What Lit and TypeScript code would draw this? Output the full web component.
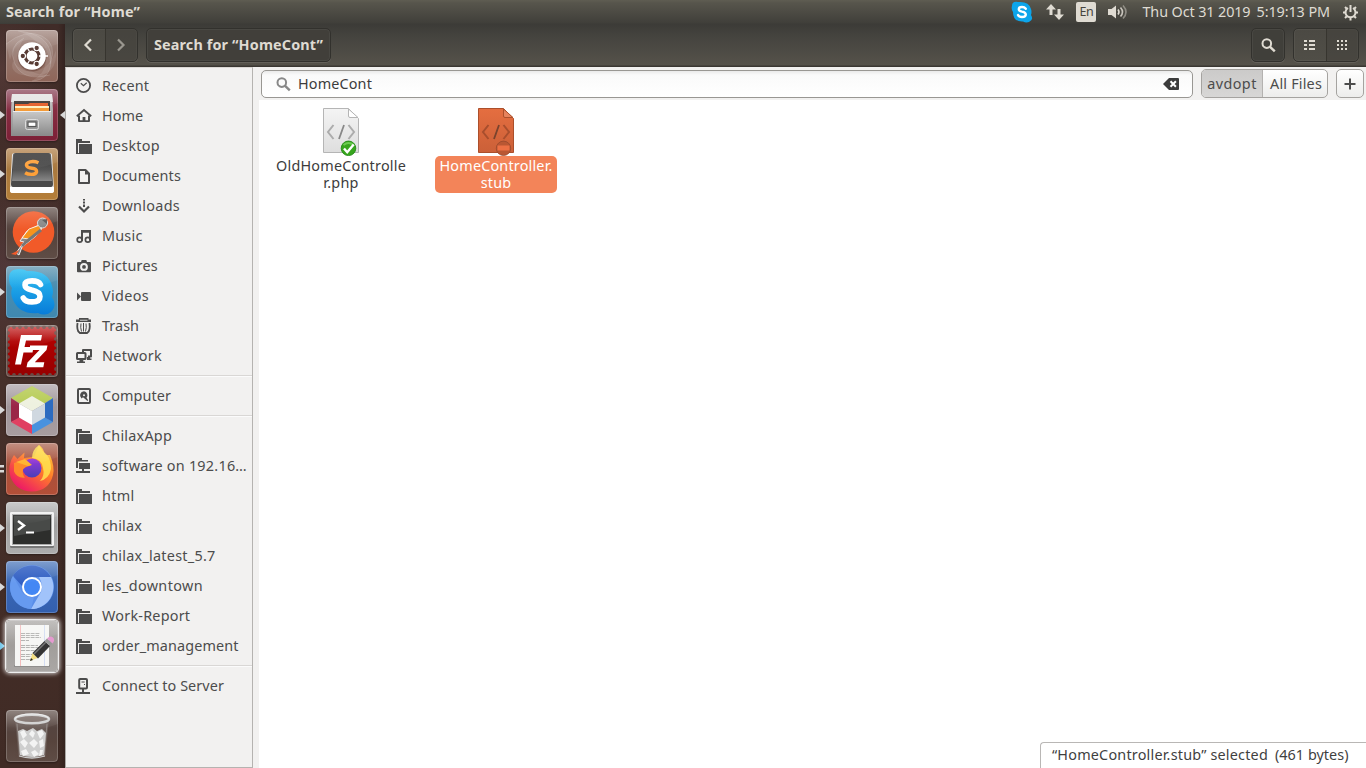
import { LitElement, html, css, svg, SVGTemplateResult } from "lit";
import { customElement, property } from "lit/decorators.js";

/* One line of text whose tracking is adjusted so that it fills a given width. */
@customElement("fit-text")
class FitText extends LitElement {
  @property() text = "";
  @property({ type: Number }) w = 0;
  static styles = css`
    :host { display: inline-block; white-space: pre; flex: none; }
    span { display: inline-block; }
  `;
  updated() {
    const el = this.renderRoot.querySelector("span") as HTMLElement;
    el.style.letterSpacing = "0px";
    const natural = el.getBoundingClientRect().width;
    const gap = (this.w - natural) / Math.max(1, this.text.length);
    el.style.letterSpacing = gap.toFixed(3) + "px";
  }
  render() {
    return html`<span>${this.text}</span>`;
  }
}

const folder = svg`<path d="M0 1h6v2h8v2H2v11H0z"/><path d="M3 6h13v9.500a.5.5 0 0 1-.5.5H3z"/><path d="M0 15h3v1H0z"/>`;

const glyphs: Record<string, SVGTemplateResult> = {
  folder,
  recent: svg`<circle cx="7.500" cy="7.500" r="6.600" fill="none" stroke="currentColor" stroke-width="1.800"/><path d="M4.800 5.300l2.700 2.500 3.200-3" fill="none" stroke="currentColor" stroke-width="1.200"/>`,
  home: svg`<path d="M.8 8.200L8 2l7.200 6.200" fill="none" stroke="currentColor" stroke-width="1.900"/><path d="M2 7.500h2V12.200h2.600V9h2.800v3.200H12V7.500h2V13a1 1 0 0 1-1 1H3a1 1 0 0 1-1-1z"/>`,
  doc: svg`<path d="M3 2h6.500L13 5.500V15H3z" fill="none" stroke="currentColor" stroke-width="2" stroke-linejoin="round"/><path d="M9 2v4.500h4.500z"/>`,
  down: svg`<path d="M7 1h2v1.500H7zM7 3.600h2v1.800H7zM7 6.400h2V9H7z"/><path d="M3 8.500L8 13.500l5-5" fill="none" stroke="currentColor" stroke-width="2.200"/>`,
  music: svg`<path d="M5 2h10v10h-2V4.800H7V13H5z"/><circle cx="3.600" cy="11.800" r="2.400" fill="none" stroke="currentColor" stroke-width="1.700"/><circle cx="11.800" cy="11.800" r="2.400" fill="none" stroke="currentColor" stroke-width="1.700"/>`,
  camera: svg`<path fill-rule="evenodd" d="M5 4l.7-2h4.600L11 4h3q1 0 1 1v8.500q0 .8-1 .8H2q-1 0-1-.8V5q0-1 1-1zM8 5a3.900 3.900 0 1 0 0 7.800A3.900 3.900 0 0 0 8 5zm0 2a1.900 1.900 0 1 1 0 3.800A1.900 1.900 0 0 1 8 7z"/>`,
  video: svg`<path d="M1 4.500L5 8.500 1 12.500z"/><rect x="5" y="4" width="10" height="9" rx="1"/>`,
  trash: svg`<path d="M3 0h9.500v1.500H15V4H0V1.500h3z"/><path d="M4 1.800h7.500v.8H4z" fill="#f2f1f0"/><path d="M1.600 5q-1 5 .7 8.500L4 15h7l1.700-1.500Q14.400 10 13.400 5" fill="none" stroke="currentColor" stroke-width="1.800"/><path d="M5 5.500q-.8 4 .5 8M7.500 5v8.500M10 5.500q.8 4-.5 8" fill="none" stroke="currentColor" stroke-width="1"/>`,
  network: svg`<path d="M7 4V2h8v6.500h-3" fill="none" stroke="currentColor" stroke-width="2" stroke-linejoin="round"/><path d="M11 9h3v1.500h1.500V12H11z"/><rect x="1" y="5" width="8.500" height="6" rx=".6" fill="none" stroke="currentColor" stroke-width="2"/><path d="M3.500 12h3.800v1.500H9V15H1v-1.500h2.500z"/>`,
  disk: svg`<rect x="2" y="1" width="12" height="14" rx="1" fill="none" stroke="currentColor" stroke-width="2"/><path d="M8 3.300a4 4 0 0 0-2.500 7.100L7 9.200 11.500 13l.7-.7-1.700-2.500A4 4 0 0 0 8 3.300z"/><circle cx="8" cy="7.200" r="1" fill="#f2f1f0"/>`,
  remote: svg`<path d="M0 0h6v2h6v1.600H2V10H0z"/><path d="M3 5h11v6H8v2h6v2H0v-2h6v-2H3z"/>`,
  server: svg`<rect x="3.200" y="1" width="7.800" height="9.500" rx="1" fill="none" stroke="currentColor" stroke-width="2"/><path d="M5.500 3.500h3.200v1h-3.200zM8 6h1v1H8zM6 11h2v3h6v2H0v-2h6z"/>`,
};

const places: [string, string, number][][] = [
  [
    ["recent", "Recent", 47], ["home", "Home", 41.300], ["folder", "Desktop", 58], ["doc", "Documents", 79],
    ["down", "Downloads", 78], ["music", "Music", 40.500], ["camera", "Pictures", 56], ["video", "Videos", 47],
    ["trash", "Trash", 37], ["network", "Network", 60],
  ],
  [["disk", "Computer", 69]],
  [
    ["folder", "ChilaxApp", 70], ["remote", "software on 192.16…", 145], ["folder", "html", 32.500], ["folder", "chilax", 40],
    ["folder", "chilax_latest_5.7", 113.500], ["folder", "les_downtown", 101], ["folder", "Work-Report", 88.200], ["folder", "order_management", 136.500],
  ],
  [["server", "Connect to Server", 122]],
];

const apps: { bg: string; mark?: string; back?: boolean; focus?: boolean; art: SVGTemplateResult }[] = [
  {
    bg: "dash",
    art: svg`<g fill="#fff" fill-opacity=".1"><path d="M0 14Q20-2 36 6T44 34Q42 12 26 10T4 30z"/><path d="M12 1Q44 4 45 27T26 51Q44 40 38 24T12 1z"/><path d="M50 20Q52 46 27 46T7 31Q16 44 30 41T50 20z"/><path d="M44 45Q17 52 9 34T18 8Q8 24 18 35T44 45z"/></g>
    <g fill="none" stroke="#fff" stroke-opacity=".14"><path d="M0 14Q20-2 36 6T44 34"/><path d="M12 1Q44 4 45 27T26 51"/><path d="M44 45Q17 52 9 34T18 8"/></g>
    <circle cx="26" cy="27" r="14.500" fill="#5c3932" opacity=".4"/><circle cx="26" cy="26" r="13.800" fill="#fff"/><circle cx="26" cy="26" r="7" fill="none" stroke="#573a33" stroke-width="3.200"/>
    <path d="M19 14l4.500 7.500M33 26h9M19 38l4.500-7.500" stroke="#fff" stroke-width="1.300"/><g stroke="#fff" stroke-width="1.100" fill="#573a33"><circle cx="16.800" cy="26" r="2.700"/><circle cx="30.700" cy="18" r="2.700"/><circle cx="30.700" cy="34" r="2.700"/></g>`,
  },
  {
    bg: "files", mark: "one", back: true,
    art: svg`<path d="M6 5h40l1 16v26H5V21z" fill="url(#silver)"/><path d="M6 5h40l1 8H5z" fill="#e4e4e4"/><rect x="8" y="12" width="36" height="12" fill="#3b3532"/><path d="M9 15h13l2-1h18v8H9z" fill="#e55b25"/><path d="M9 17h34v2H9z" fill="#fff0c0"/><path d="M9 19h34v5H9z" fill="#f49b38"/><path d="M7 22h38v24H7z" fill="url(#silver)"/><path d="M7 22h38v1H7z" fill="#eee"/><rect x="19.500" y="30.500" width="13" height="10" rx="2" fill="#999" stroke="#ddd"/><rect x="22" y="33" width="8" height="4.500" fill="#fff" stroke="#555" stroke-width="1.200"/>`,
  },
  {
    bg: "sublime", mark: "one",
    art: svg`<path d="M6 7Q6 5 9 5h34q3 0 3 2l2 34q0 4-3 4H7q-3 0-3-4z" fill="#e6e6e6"/><path d="M4 39h44v4q0 2-3 2H7q-3 0-3-2z" fill="#fff"/><path d="M7 7Q7 5 10 5h32q3 0 3 2l2 29q0 3-2 3H7q-2 0-2-3z" fill="#4a4a4a"/><path d="M8 7q0-2 2-2h32q2 0 2 2l2 26H6z" fill="url(#dark)"/><path d="M32.500 14.700q-4-1.700-8.500-.9-4 1.100-3.500 3.600.5 2.300 5.500 2.800t4.600 3.500q-.7 2.700-5 2.700-4 0-6.500-1.600" fill="none" stroke="#fda039" stroke-width="3.400"/>`,
  },
  {
    bg: "clear",
    art: svg`<circle cx="27.500" cy="25" r="20.800" fill="#f15a29"/><path d="M33 18L21 24 14 34l4 1-8 11 3 2 3-8 14-11 6-8z" fill="#8a8a8a" stroke="#eee" stroke-width="1"/><path d="M34 18l-11 4-7 9 7 1 12-9z" fill="#f7941d" stroke="#fff" stroke-width=".8"/><path d="M35 23L20 35l-4 4" stroke="#777" stroke-width="3" fill="none"/><circle cx="36.500" cy="16" r="5" fill="#888" stroke="#ddd" stroke-width="1"/><path d="M36 13l5-1v5z" fill="#555"/><path d="M5 47l8-4-3 5z" fill="#f15a29"/>`,
  },
  {
    bg: "skype", mark: "one",
    art: svg`<path d="M3 14Q2 3 13 3q5 0 8 2 21-1 25 15 2 6 0 11 5 8 0 14-6 6-14 2Q14 49 7 34 4 28 6 22 3 18 3 14z" fill="url(#sky)"/><path d="M34.500 18.500q-2-3.600-8.500-3.600-7 0-7 4 0 3.500 6.700 5.100 8.300 1.700 8.300 6.500 0 5.400-8 5.400-6.700 0-8.700-4" fill="none" stroke="#fff" stroke-width="5.600" stroke-linecap="round"/>`,
  },
  {
    bg: "clear",
    art: svg`<rect x="2" y="2" width="48" height="48" fill="url(#red)"/><rect x="2" y="2" width="48" height="48" fill="none" stroke="#6b4a44" stroke-width="3.800" stroke-linecap="round" stroke-dasharray="0 6"/><path d="M15 10h21l-1 5.500H20L18.500 22h9l-1 5.500h-9L15 39.500H9z" fill="#fff"/><path d="M24 20.500h17.500L40.500 25 28.800 37.200h9.500l-1 5H20.500l1-4.700L33.500 25H24z" fill="#fff"/>`,
  },
  {
    bg: "grey", mark: "one",
    art: svg`<path d="M26 2l21 12-10 6-11-7-11 7-10-6z" fill="#b6cb53"/><path d="M5 14l9 6v14l-9 4z" fill="#9a2647"/><path d="M5 38l9-5 12 7v10z" fill="#e04061"/><path d="M47 38l-9-5-12 7v10z" fill="#4992df"/><path d="M47 14l-9 6v13l9 5z" fill="#2c6bc0"/><path d="M26 12l13 7.500L26 27l-13-7.500z" fill="#eef1df"/><path d="M13 19.500L26 27v14l-13-7.500z" fill="#fff"/><path d="M39 19.500L26 27v14l13-7.500z" fill="#d0d8e0"/>`,
  },
  {
    bg: "fox", mark: "two",
    art: svg`<path d="M8 12l3.500 4 7-6.500-.5 5.500 10-1 5-12q4 2 6 10l5 0q5 12 3 20-4 16-21 16.500Q10 48 4.500 34 1 22 8 12z" fill="url(#flame)"/><path d="M33 2q-7 5-7 13 10 1 11 10 2 8-3 13 9-2 11-12 0-9-4-14-5-4-8-10z" fill="#ffe24f" opacity=".85"/><circle cx="26" cy="25" r="9.500" fill="url(#violet)"/><path d="M8 20q7-3 17 2.500-6 1-8 4-1 5 2 8-8 1-11-6z" fill="#ff8a2a"/><path d="M10 19l9-3 7 6-4 1z" fill="#ffb42e"/>`,
  },
  {
    bg: "steel", mark: "one",
    art: svg`<rect x="4" y="10" width="44" height="36" rx="1.500" fill="#777"/><rect x="4" y="10" width="44" height="34" rx="1" fill="#f1f1f1"/><rect x="6" y="12" width="40" height="31" fill="#aaa"/><rect x="7" y="13" width="38" height="29" fill="#2d2e2c"/><path d="M8 14h36v14L8 34z" fill="#484a48"/><path d="M12 19l6 4.500-6 4.500" fill="none" stroke="#fff" stroke-width="2.400"/><path d="M20 29.500h8v2h-8z" fill="#fff"/>`,
  },
  {
    bg: "chrome", mark: "one",
    art: svg`<circle cx="26" cy="26" r="22" fill="#5a8ee8"/><path d="M7 15A22 22 0 0 1 45 16H26q-8 0-10 9z" fill="#315fc3"/><path d="M45 16A22 22 0 0 1 25 48l10-17q3-5-2-15z" fill="#a1c3fa"/><path d="M7 15l9 16q4 6 12 5l-3 12A22 22 0 0 1 7 15z" fill="#669af0"/><circle cx="26" cy="26" r="10" fill="#fff"/><circle cx="26" cy="26" r="8" fill="#4387f4"/>`,
  },
  {
    bg: "paper", mark: "active", focus: true,
    art: svg`<path d="M8 45h36v2H8z" fill="#777" opacity=".5"/><rect x="9" y="5" width="34" height="41" fill="#f6f6f4"/><path d="M14.500 5v41" stroke="#f3bcbc"/><path d="M38.500 5v41" stroke="#c6d3f0" stroke-width=".7"/><path d="M15 13.500h19M15 15.500h18M15 17.500h20M15 20.500h8M15 25.500h17M15 27.500h18M15 30.500h16M15 34.500h12M15 36.500h10M15 39.500h12" stroke="#b4b4b2" stroke-dasharray="4 .8"/><path d="M24 41l2.500-8 5 5z" fill="#f4df83"/><path d="M24 41l1-3 2 2z" fill="#222"/><path d="M26.500 33L38.500 21l5.500 5L32 38.500z" fill="#343434"/><path d="M28 34l12-12" stroke="#777" stroke-width="1.500"/><path d="M38.500 21l2.500-2.500 5.500 5-2.500 2.500z" fill="#999"/><path d="M41 18.500q3.500-3.500 6-1t-.5 6z" fill="#e59ad0"/>`,
  },
];

const bin = svg`<path d="M9 9h34l-3.500 37Q26 50 12.500 46z" fill="#bbb" opacity=".18"/><path d="M12 21l5-2 4 2 6-3 4 3 5-2 4 4-2 22q-12 4-24 0z" fill="#cecece"/><path d="M14 22l4-2 3 5-4 4zM23 24l3-4 3 3-2 5zM31 22l5-2 2 4-4 5zM14 32l4-3 4 4-3 5zM23 33l5-4 4 4-4 5zM33 31l4-2 1 7-4 2zM15 41l5-2 3 5-6 2zM25 42l4-2 4 4-5 3zM34 40l3 0-1 5-3 1z" fill="#f3f3f3"/><path d="M11 14l3 32M41 14l-3 32" stroke="#ddd" opacity=".3"/><ellipse cx="26" cy="9" rx="17" ry="4.300" fill="#7b6d68" stroke="#cfcfcf" stroke-width="2.600"/><path d="M9 8.500q4-4.600 17-4.600T43 8.500" stroke="#eee" fill="none"/><path d="M13 46q13 4 26 0" stroke="#ccc" stroke-width="1.300" fill="none"/>`;

const lens = svg`<circle cx="5.800" cy="5.600" r="4.300" fill="none" stroke="currentColor" stroke-width="2"/><path d="M8.800 8.600l5 4.800" stroke="currentColor" stroke-width="2.400"/>`;

@customElement("app-root")
class AppRoot extends LitElement {
  static styles = css`
    :host {
      display: flex; flex-direction: column; width: 1366px; height: 768px; overflow: hidden;
      font: 14.400px/18px "Noto Sans", "Open Sans", sans-serif; color: #4c4c4c; background: #f2f1f0;
    }
    * { box-sizing: border-box; }
    svg { display: block; flex: none; }
    .panel {
      height: 24px; flex: none; display: flex; align-items: center; padding: 0 7px 0 6px; color: #dfdbd2;
      background: linear-gradient(#5f5d52, #57554c 12%, #403f3a 96%, #3c3b37);
    }
    .bold { font-weight: 700; color: #dfdbd2; }
    .tray { margin-left: auto; display: flex; align-items: center; }
    .net { margin-left: 13px; }
    .lang {
      margin-left: 12px; width: 20px; height: 20px; background: #dfdbd2; border-radius: 2px; color: #46443e;
      font-size: 12.500px; line-height: 20px; text-align: center;
    }
    .vol { margin-left: 12px; }
    .date { margin-left: 14px; }
    .time { margin-left: 6px; }
    .cog { margin-left: 12px; }
    .body { flex: 1; display: flex; min-height: 0; }
    .launcher {
      width: 65px; flex: none; display: flex; flex-direction: column; padding: 6px 0 6px 0; gap: 7px;
      background: radial-gradient(circle at 0 45px, #64454480, transparent 60px), radial-gradient(circle at 5px 245px, #5d424b70, transparent 90px), linear-gradient(90deg, #0000 58px, #0003), linear-gradient(#402c28, #47302a 40%, #402b25);
    }
    .slot { height: 52px; flex: none; display: flex; align-items: center; }
    .gutter { width: 6px; height: 14px; flex: none; display: flex; flex-direction: column; justify-content: center; }
    .after { width: 7px; display: flex; justify-content: flex-end; }
    .tile { width: 52px; height: 52px; flex: none; border-radius: 4px; overflow: hidden; box-shadow: 0 1px 2px #0005; }
    .spacer { flex: 1; }
    .dash { background: linear-gradient(#a88f87, #94776e 40%, #8f6659); }
    .files { background: linear-gradient(#94586a, #862d42 40%, #7c2036); }
    .sublime { background: linear-gradient(#b88c5c, #a9793f 40%, #b57e38); }
    .clear { background: linear-gradient(#756660, #55443f 35%, #57443d 60%, #5f4d46); }
    .skype { background: linear-gradient(#6a9cb5, #4a8db0 40%, #3f88b0); }
    .grey { background: linear-gradient(#b5acb0, #a0969a 45%, #a89da0); }
    .fox { background: linear-gradient(#b37462, #a8513c 40%, #b34f37); }
    .steel { background: linear-gradient(#bdbdbd, #a1a1a1 45%, #adadad); }
    .chrome { background: linear-gradient(#5f86c2, #3b68b5 40%, #335fae); }
    .paper { background: linear-gradient(#b3b0ae, #a19e9b 50%, #aaa7a5); }
    .focus { box-shadow: 0 0 0 1px #eee, 0 0 4px 2px #fffb; }
    .window { flex: 1; display: flex; flex-direction: column; min-width: 0; }
    .toolbar {
      height: 43px; flex: none; display: flex; align-items: center; padding: 0 7px 1px 7px; color: #dfdbd2;
      background: linear-gradient(#3c3b37, #45443f 30%, #55524a 41px, #3a3732 42px);
    }
    .group { display: flex; height: 34px; border: 1px solid #32312d; border-radius: 5px; box-shadow: 0 1px 0 #ffffff18, inset 0 0 0 1px #ffffff0c; background: linear-gradient(#4b4943, #504e47); overflow: hidden; }
    .cell { flex: 1; display: flex; align-items: center; justify-content: center; }
    .sunk { background: #3f3e3970; border-left: 1px solid #37352f; }
    .nav { width: 66px; }
    .nav .cell { padding-right: 1px; }
    .dim { opacity: .55; }
    .path { width: 185px; margin-left: 8px; padding-left: 7px; align-items: center; background: #413f3a; }
    .find { width: 34px; margin-left: auto; background: #403f3a; }
    .views { width: 66px; margin-left: 8px; }
    .main { flex: 1; display: flex; min-height: 0; }
    .side { width: 188px; flex: none; border-left: 1px solid #aaa8a5; border-right: 1px solid #b5b3b0; border-top: 1px solid #dcd9d6; border-bottom: 1px solid #b5b3b0; padding-top: 3px; }
    .row { height: 30px; display: flex; align-items: center; padding-left: 10px; gap: 10px; }
    .row fit-text { line-height: 20px; }
    .rule { height: 10px; padding-top: 4px; }
    .line { height: 2px; background: linear-gradient(#d9d7d5 50%, #fbfbfb 50%); }
    .pane { flex: 1; display: flex; flex-direction: column; min-width: 0; }
    .bar { height: 33px; flex: none; display: flex; align-items: flex-start; padding: 2px 2px 0 8px; }
    .entry {
      width: 932px; height: 28px; margin-top: 1px; display: flex; align-items: center; padding: 0 12px 0 14px; border: 1px solid #999793; border-radius: 5px;
      background: linear-gradient(#eaeaea, #fafafa 4px, #fff); color: #3c3c3c;
    }
    .query { margin-left: 7px; }
    .erase { margin-left: auto; }
    .scope { width: 127px; height: 29px; margin-left: 8px; display: flex; border: 1px solid #a5a3a0; border-radius: 5px; overflow: hidden; background: linear-gradient(#fff, #ededec); }
    .scope .cell.on { flex: 0 0 61px; background: linear-gradient(#cbcac9, #d8d7d6); border-right: 1px solid #b4b2b0; }
    .scope .cell:last-child { padding-left: 2px; }
    .plus { width: 28px; height: 29px; margin-left: 8px; border: 1px solid #a5a3a0; border-radius: 5px; display: flex; align-items: center; justify-content: center; background: linear-gradient(#fff, #ededec); }
    .canvas { flex: 1; margin-left: 6px; background: #fff; display: flex; flex-direction: column; justify-content: space-between; }
    .grid { display: flex; padding: 7px 0 0 14px; color: #3c3c3c; }
    .file { display: flex; flex-direction: column; align-items: center; width: 136px; margin-right: 19px; }
    .name { display: flex; flex-direction: column; align-items: center; line-height: 17px; border-radius: 5px; width: 136px; height: 37px; padding-top: 1px; }
    .picked { width: 122px; background: #f38459; color: #fff; }
    .status {
      align-self: flex-end; width: 326px; height: 26px; display: flex; align-items: center; padding: 0 0 2px 11px; gap: 7px;
      border: 1px solid #b9b7b5; border-right: 0; border-bottom: 0; border-top-left-radius: 4px; color: #3f3f3f;
    }
  `;

  private sym(name: string) {
    return html`<svg width="16" height="16" viewBox="0 0 16 16" fill="currentColor">${glyphs[name]}</svg>`;
  }

  private marker(kind?: string) {
    if (kind === "two")
      return html`<svg width="6" height="14" viewBox="0 0 6 14"><path d="M0 3h4v2.500H0zM0 8h4v2.500H0z" fill="#d9d9d9"/></svg>`;
    if (!kind) return "";
    return html`<svg width="6" height="14" viewBox="0 0 6 14"><path d="M0 3l5 4-5 4z" fill=${kind === "active" ? "#73c8ec" : "#d9d9d9"}/></svg>`;
  }

  private page(selected: boolean) {
    const edge = selected ? "#ac4f2b" : "#b5b5b5";
    const ink = selected ? "#a84e2d" : "#acacac";
    const sheet = selected ? "sheet-picked" : "sheet-plain";
    return html`<svg width="44" height="49" viewBox="0 0 44 49">
      <defs><linearGradient id=${sheet} x2="0" y2="1"><stop stop-color=${selected ? "#e56e40" : "#f4f4f4"}/><stop offset="1" stop-color=${selected ? "#cb6038" : "#dedede"}/></linearGradient></defs>
      <path d="M4.500 1.500h25l10 10v34h-35z" fill="url(#${sheet})" stroke=${edge}/>
      <path d="M29.500 2v7q0 1.500 1.500 1.500h8z" fill=${selected ? "#e7835d" : "#fff"} stroke=${edge}/>
      <path d="M14.500 18l-5.500 7 5.500 7M29.500 18l5.500 7-5.500 7" fill="none" stroke=${ink} stroke-width="2"/><path d="M25 18l-5 14" stroke=${selected ? "#79432d" : "#888"} stroke-width="1.800"/>
      ${selected
        ? svg`<circle cx="29.500" cy="41.300" r="7.200" fill="#ba5733" stroke="#98492d" stroke-width=".8"/><rect x="23.500" y="38.500" width="12" height="5" fill="#ed7044"/>`
        : svg`<circle cx="29.500" cy="41.300" r="7.300" fill="#37a51d" stroke="#16840b" stroke-width=".8"/><path d="M24.500 38q5-4 10 0" stroke="#6ccc50" stroke-width="2" fill="none"/><path d="M25 41.500l3.200 3.700 6.500-7.800" fill="none" stroke="#fff" stroke-width="2.400"/>`}
    </svg>`;
  }

  private art(content: SVGTemplateResult) {
    return html`<svg width="52" height="52" viewBox="0 0 52 52"><defs>
      <linearGradient id="silver" x2="0" y2="1"><stop stop-color="#c9c9c9"/><stop offset="1" stop-color="#8b8b8b"/></linearGradient>
      <linearGradient id="dark" x2="0" y2="1"><stop stop-color="#343434"/><stop offset=".6" stop-color="#555"/><stop offset="1" stop-color="#888"/></linearGradient>
      <linearGradient id="sky" x2="0" y2="1"><stop stop-color="#2cc0f2"/><stop offset="1" stop-color="#087bd8"/></linearGradient>
      <linearGradient id="red" x2="0" y2="1"><stop stop-color="#c83c3c"/><stop offset=".3" stop-color="#b00000"/><stop offset="1" stop-color="#970000"/></linearGradient>
      <linearGradient id="flame" x1="1" x2=".3" y2="1"><stop stop-color="#ffe03c"/><stop offset=".5" stop-color="#ff7b2a"/><stop offset="1" stop-color="#ed1767"/></linearGradient>
      <linearGradient id="violet" x2="0" y2="1"><stop stop-color="#9b37d8"/><stop offset="1" stop-color="#4b3fb8"/></linearGradient>
      <linearGradient id="gloss" x2="0" y2="1"><stop stop-color="#fff" stop-opacity=".2"/><stop offset="1" stop-color="#fff" stop-opacity="0"/></linearGradient></defs>
      ${content}<path d="M0 0h52v14Q26 24 0 22z" fill="url(#gloss)"/><rect x=".5" y=".5" width="51" height="51" rx="3.500" fill="none" stroke="#fff" stroke-opacity=".2"/></svg>`;
  }

  render() {
    return html`
      <div class="panel">
        <fit-text class="bold" text="Search for “Home”" w="134"></fit-text>
        <div class="tray">
          <svg width="22" height="22" viewBox="0 0 22 22"><path d="M1 5Q1 0 7 1q11-1 13 7 1 3 0 6 3 5-2 7-3 1-6-.5Q2 21 2 11 0 8 1 5z" fill="#0da5ea"/><path d="M14.800 7.800Q13.500 6 11 6 7.800 6 7.800 8.200q0 1.700 3.200 2.400 3.800.7 3.800 3 0 2.400-3.800 2.400-3 0-4-2" fill="none" stroke="#fff" stroke-width="2.400" stroke-linecap="round"/></svg>
          <svg class="net" width="18" height="18" viewBox="0 0 18 18" fill="#dfdbd2"><path d="M5 1l5 5.500H6.500V12h-3V6.500H0zM11.500 6h3v5.500H18L13 17 8 11.500h3.500z"/></svg>
          <div class="lang"><fit-text text="En" w="14"></fit-text></div>
          <svg class="vol" width="20" height="16" viewBox="0 0 20 16"><path d="M0 5h3.500L8 1.500v13L3.500 11H0z" fill="#dfdbd2"/><g fill="none" stroke="#dfdbd2" stroke-width="1.600"><path d="M10 5.500q2 2.500 0 5"/><path d="M12.500 3.500q4 4.500 0 9" opacity=".85"/><path d="M15 1.500q6 6.500 0 13" opacity=".45"/></g></svg>
          <fit-text class="date" text="Thu Oct 31 2019" w="108"></fit-text>
          <fit-text class="time" text="5:19:13 PM" w="73.500"></fit-text>
          <svg class="cog" width="17" height="17" viewBox="0 0 17 17" fill="none" stroke="#dfdbd2"><path d="M6 4a5 5 0 1 0 5 0" stroke-width="2"/><path d="M8.500 1v7" stroke-width="2"/><path d="M1 8.500h2M14 8.500h2M3 3l1.800 1.800M14 3l-1.800 1.800M3 14l1.800-1.800M14 14l-1.800-1.800M8.500 14v2.500" stroke-width="2"/></svg>
        </div>
      </div>
      <div class="body">
        <div class="launcher">
          ${apps.map((a) => html`<div class="slot"><div class="gutter">${this.marker(a.mark)}</div><div class="tile ${a.bg} ${a.focus ? "focus" : ""}">${this.art(a.art)}</div><div class="after">${a.back ? html`<svg width="6" height="12" viewBox="0 0 6 12"><path d="M6 2L1 6l5 4z" fill="#d9d9d9"/></svg>` : ""}</div></div>`)}
          <div class="spacer"></div>
          <div class="slot"><div class="gutter"></div><div class="tile clear">${this.art(bin)}</div></div>
        </div>
        <div class="window">
          <div class="toolbar">
            <div class="group nav">
              <div class="cell"><svg width="12" height="14" viewBox="0 0 12 14"><path d="M9 1.500L3.500 7 9 12.500" fill="none" stroke="#dfdbd2" stroke-width="2.200"/></svg></div>
              <div class="cell sunk"><svg class="dim" width="12" height="14" viewBox="0 0 12 14"><path d="M3 1.500L8.500 7 3 12.500" fill="none" stroke="#dfdbd2" stroke-width="2.200"/></svg></div>
            </div>
            <div class="group path"><fit-text class="bold" text="Search for “HomeCont”" w="169"></fit-text></div>
            <div class="group find"><div class="cell"><svg width="15" height="15" viewBox="0 0 15 15">${lens}</svg></div></div>
            <div class="group views">
              <div class="cell"><svg width="11" height="11" viewBox="0 0 11 11" fill="#dfdbd2"><path d="M0 0h3v2H0zM5 0h6v2H5zM0 4h3v2H0zM5 4h6v2H5zM0 8h3v2H0zM5 8h6v2H5z"/></svg></div>
              <div class="cell sunk"><svg width="11" height="11" viewBox="0 0 11 11" fill="#dfdbd2"><path d="M0 0h2v2H0zM4 0h2v2H4zM8 0h2v2H8zM0 4h2v2H0zM4 4h2v2H4zM8 4h2v2H8zM0 8h2v2H0zM4 8h2v2H4zM8 8h2v2H8z"/></svg></div>
            </div>
          </div>
          <div class="main">
            <div class="side">
              ${places.map((set, i) => html`${i ? html`<div class="rule"><div class="line"></div></div>` : ""}${set.map(([g, t, w]) => html`<div class="row">${this.sym(g)}<fit-text text=${t} w=${w}></fit-text></div>`)}`)}
            </div>
            <div class="pane">
              <div class="bar">
                <div class="entry">
                  <svg width="15" height="15" viewBox="0 0 15 15" color="#888">${lens}</svg>
                  <fit-text class="query" text="HomeCont" w="74"></fit-text>
                  <svg class="erase" width="17" height="13" viewBox="0 0 17 13"><path d="M6 0h9q1 0 1 1v10q0 1-1 1H6L0 6z" fill="#3c3c3c"/><path d="M7.500 3.300l5.400 5.400M12.900 3.300L7.500 8.700" stroke="#fff" stroke-width="2"/></svg>
                </div>
                <div class="scope"><div class="cell on"><fit-text text="avdopt" w="49.500"></fit-text></div><div class="cell"><fit-text text="All Files" w="52"></fit-text></div></div>
                <div class="plus"><svg width="12" height="12" viewBox="0 0 12 12"><path d="M6 .5v11M.5 6h11" stroke="#4c4c4c" stroke-width="2"/></svg></div>
              </div>
              <div class="canvas">
                <div class="grid">
                  <div class="file">${this.page(false)}<div class="name"><fit-text text="OldHomeControlle" w="130"></fit-text><fit-text text="r.php" w="35.500"></fit-text></div></div>
                  <div class="file">${this.page(true)}<div class="name picked"><fit-text text="HomeController." w="113"></fit-text><fit-text text="stub" w="30.500"></fit-text></div></div>
                </div>
                <div class="status"><fit-text text="“HomeController.stub” selected" w="216"></fit-text><fit-text text="(461 bytes)" w="73.500"></fit-text></div>
              </div>
            </div>
          </div>
        </div>
      </div>`;
  }
}
